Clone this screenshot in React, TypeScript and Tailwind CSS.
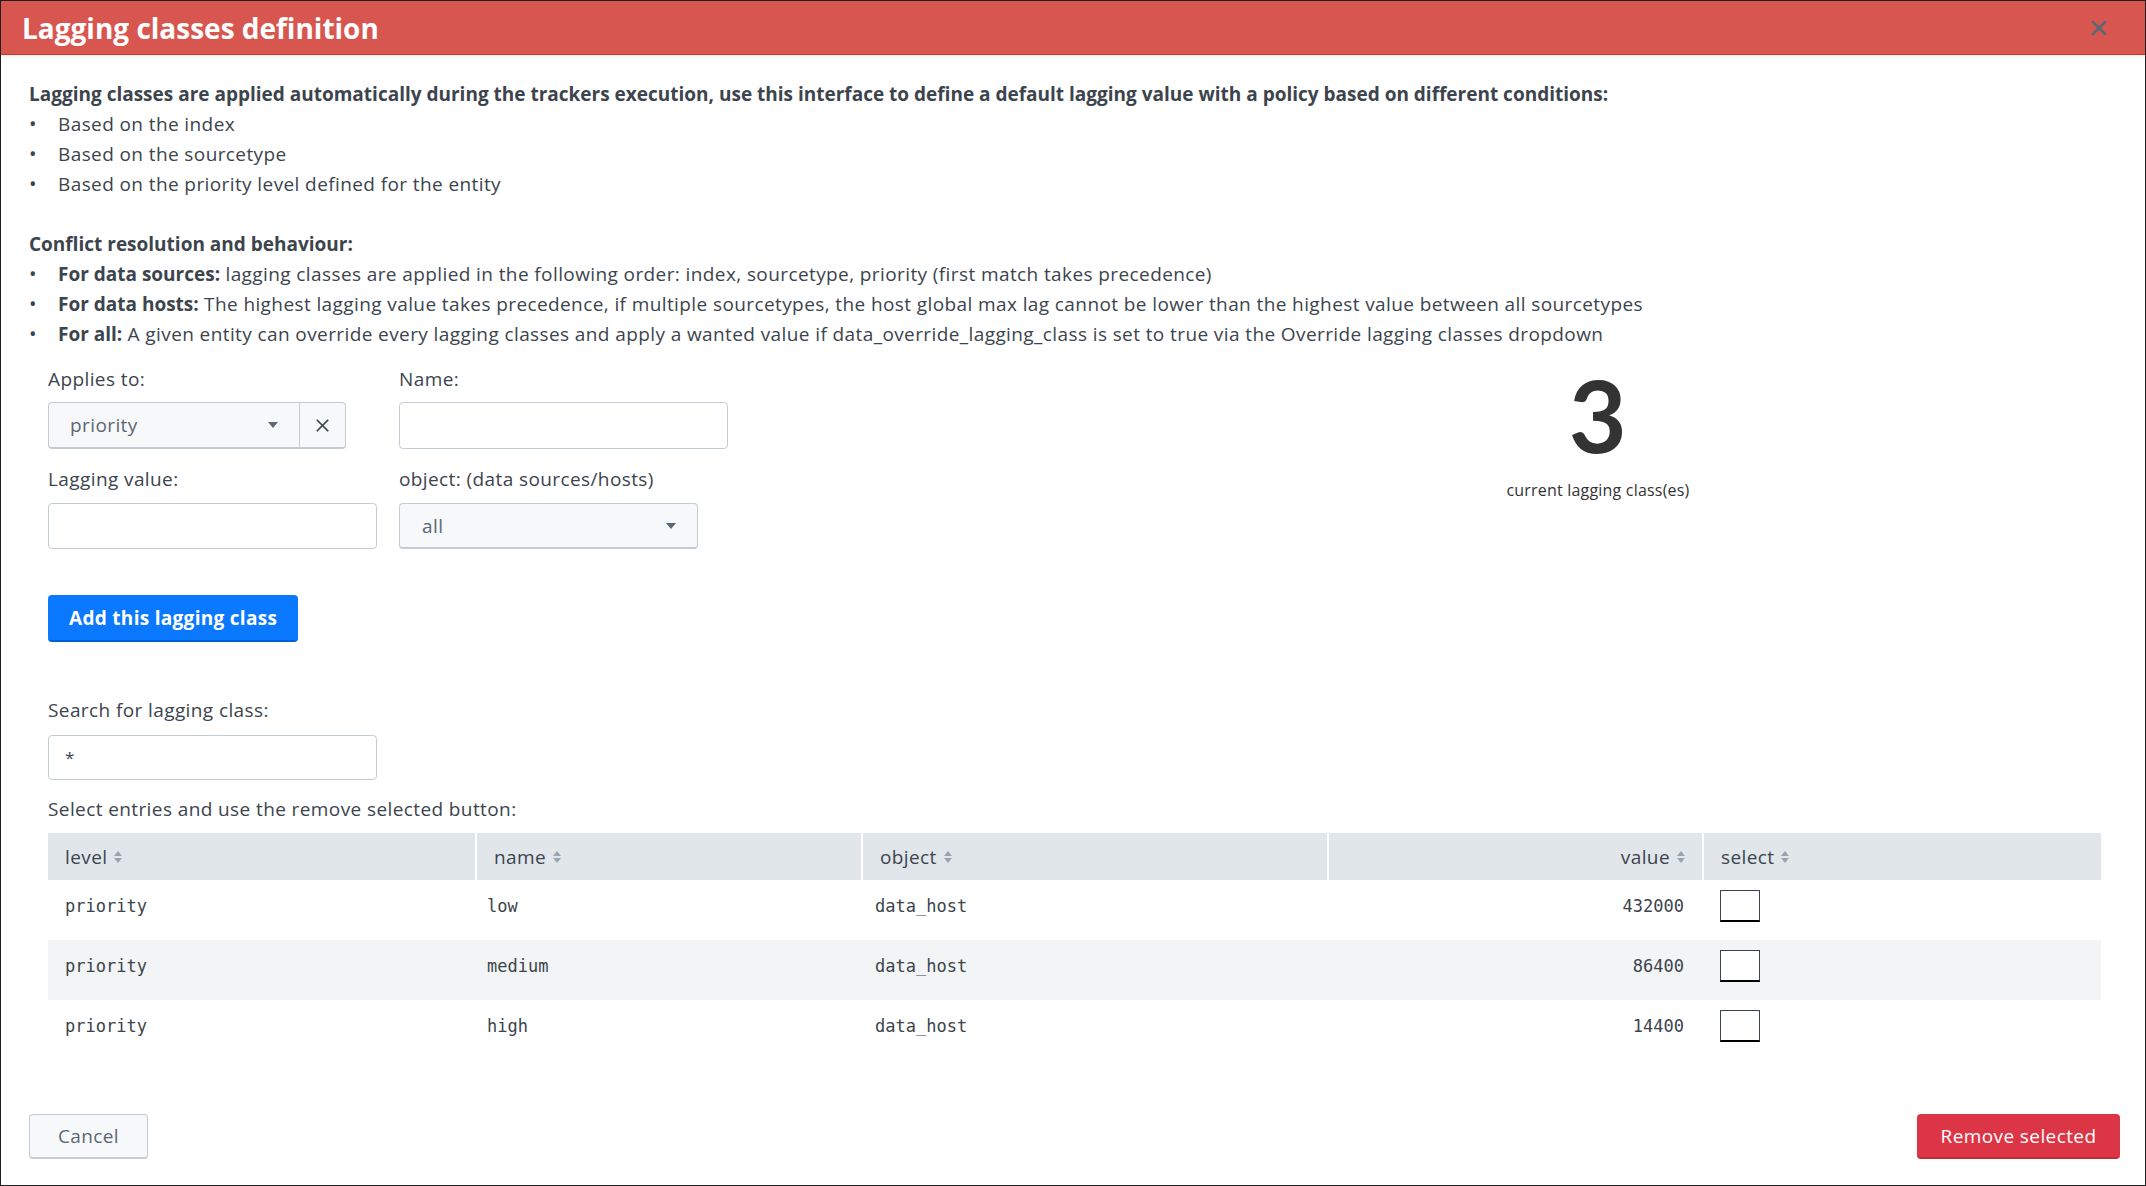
import type { ReactNode } from 'react';
import { X } from 'lucide-react';

const font = { fontFamily: '"Open Sans", Lato, sans-serif' };
const mono = { fontFamily: '"DejaVu Sans Mono", "Liberation Mono", monospace' };

function Caret() {
  return (
    <svg width="12" height="8" viewBox="0 0 12 8" className="shrink-0">
      <path d="M1 1h10L6 7z" fill="#5c6773" />
    </svg>
  );
}

function SortIcon() {
  return (
    <svg width="10" height="14" viewBox="0 0 10 14" className="ml-[6px] shrink-0">
      <path d="M1 6L5 1l4 5z" fill="#9aa4ae" />
      <path d="M1 8l4 5 4-5z" fill="#9aa4ae" />
    </svg>
  );
}

function Bullet({ children }: { children: ReactNode }) {
  return (
    <li className="flex">
      <span className="w-[29px] shrink-0 text-[20px] leading-[30px]">•</span>
      <span>{children}</span>
    </li>
  );
}

const rows = [
  { level: 'priority', name: 'low', object: 'data_host', value: '432000' },
  { level: 'priority', name: 'medium', object: 'data_host', value: '86400' },
  { level: 'priority', name: 'high', object: 'data_host', value: '14400' },
];

const cols = [
  { label: 'level', w: 'w-[427px]', right: false },
  { label: 'name', w: 'w-[386px]', right: false },
  { label: 'object', w: 'w-[466px]', right: false },
  { label: 'value', w: 'w-[375px]', right: true },
  { label: 'select', w: 'flex-1', right: false },
];

export default function App() {
  return (
    <div
      className="flex h-screen w-full flex-col overflow-hidden border border-[#1f1f1f] bg-white text-[19px] tracking-[0.4px] text-[#3c444d]"
      style={font}
    >
      {/* Header */}
      <div className="flex h-[54px] shrink-0 items-center justify-between border-b border-[#e0301e] bg-[#d85650] pl-[21px] pr-[34px] shadow-[0_2px_3px_rgba(0,0,0,0.06)]">
        <h1 className="text-[28px] font-bold leading-none tracking-[0px] text-white">Lagging classes definition</h1>
        <X className="h-[24px] w-[24px] text-[#5c6773]" strokeWidth={2.6} />
      </div>

      {/* Body */}
      <div className="flex flex-1 flex-col px-[28px] pt-[24px] leading-[30px]">
        <p className="font-bold tracking-[0px]">
          Lagging classes are applied automatically during the trackers execution, use this interface to define a default lagging value with a policy based on different conditions:
        </p>
        <ul>
          <Bullet>Based on the index</Bullet>
          <Bullet>Based on the sourcetype</Bullet>
          <Bullet>Based on the priority level defined for the entity</Bullet>
        </ul>
        <p className="mt-[30px] font-bold tracking-[0px]">Conflict resolution and behaviour:</p>
        <ul>
          <Bullet>
            <b className="tracking-[0px]">For data sources:</b> lagging classes are applied in the following order: index, sourcetype, priority (first match takes precedence)
          </Bullet>
          <Bullet>
            <b className="tracking-[0px]">For data hosts:</b> The highest lagging value takes precedence, if multiple sourcetypes, the host global max lag cannot be lower than the highest value between all sourcetypes
          </Bullet>
          <Bullet>
            <b className="tracking-[0px]">For all:</b> A given entity can override every lagging classes and apply a wanted value if data_override_lagging_class is set to true via the Override lagging classes dropdown
          </Bullet>
        </ul>

        {/* Form */}
        <div className="mt-[15px] flex pl-[19px]">
          <div className="grid grid-cols-[351px_330px] gap-y-[15px]">
            <div>
              <div>Applies to:</div>
              <div className="mt-[8px] flex h-[47px] w-[298px] rounded-[4px] border border-[#c3cbd4] border-b-2 bg-[#f7f8fa]">
                <div className="flex flex-1 items-center justify-between pl-[21px] pr-[20px] text-[#5c6773]">
                  <span>priority</span>
                  <Caret />
                </div>
                <div className="flex w-[46px] items-center justify-center border-l border-[#c3cbd4]">
                  <X className="h-[21px] w-[21px] text-[#3c444d]" strokeWidth={2} />
                </div>
              </div>
            </div>
            <div>
              <div>Name:</div>
              <div className="mt-[8px] h-[47px] w-[329px] rounded-[4px] border border-[#c3cbd4] bg-white" />
            </div>
            <div>
              <div>Lagging value:</div>
              <div className="mt-[9px] h-[46px] w-[329px] rounded-[4px] border border-[#c3cbd4] bg-white" />
            </div>
            <div>
              <div>object: (data sources/hosts)</div>
              <div className="mt-[9px] flex h-[46px] w-[299px] items-center justify-between rounded-[4px] border border-[#c3cbd4] border-b-2 bg-[#f7f8fa] pl-[22px] pr-[20px] text-[#5c6773]">
                <span>all</span>
                <Caret />
              </div>
            </div>
          </div>
          <div className="ml-[719px] flex w-[300px] flex-col items-center">
            <div className="text-[100px] font-bold leading-[100px] text-[#333]" style={{ fontFamily: 'Lato, sans-serif' }}>
              3
            </div>
            <div className="mt-[14px] text-[16px] leading-[24px] tracking-[0.2px] text-[#333]">current lagging class(es)</div>
          </div>
        </div>

        <div className="pl-[19px]">
          <button className="mt-[46px] h-[47px] rounded-[4px] border-b-2 border-[#0060d9] bg-[#0a78ff] px-[21px] font-bold tracking-[0.3px] text-white">
            Add this lagging class
          </button>

          <div className="mt-[53px]">Search for lagging class:</div>
          <div className="mt-[10px] flex h-[45px] w-[329px] items-center rounded-[4px] border border-[#c3cbd4] bg-white pl-[16px] text-[17px] text-[#3c444d]">
            *
          </div>

          <div className="mt-[14px]">Select entries and use the remove selected button:</div>

          {/* Table */}
          <div className="mt-[9px] mr-[16px]">
            <div className="flex h-[47px] bg-[#e1e6eb]">
              {cols.map((c, i) => (
                <div
                  key={c.label}
                  className={`${c.w} flex items-center ${i > 0 ? 'border-l-2 border-white' : ''} ${c.right ? 'justify-end pr-[16px]' : 'pl-[17px]'}`}
                >
                  <span>{c.label}</span>
                  <SortIcon />
                </div>
              ))}
            </div>
            {rows.map((r, idx) => (
              <div
                key={r.name}
                className={`flex h-[60px] items-center pb-[8px] text-[17px] tracking-[0px] ${idx === 1 ? 'bg-[#f2f4f5]' : 'bg-white'}`}
                style={mono}
              >
                <div className="w-[427px] pl-[17px]">{r.level}</div>
                <div className="w-[386px] pl-[12px]">{r.name}</div>
                <div className="w-[466px] pl-[14px]">{r.object}</div>
                <div className="w-[375px] pr-[18px] text-right">{r.value}</div>
                <div className="flex-1 pl-[18px]">
                  <div className="h-[32px] w-[40px] border border-[#3c444d] border-b-2 border-b-black bg-white" />
                </div>
              </div>
            ))}
          </div>
        </div>

        {/* Footer */}
        <div className="mt-auto mb-[26px] flex items-center justify-between">
          <button className="h-[45px] w-[119px] rounded-[4px] border border-[#c3cbd4] border-b-2 bg-[#f7f8fa] text-[#5c6773]">
            Cancel
          </button>
          <button className="-mr-[3px] h-[45px] w-[203px] rounded-[4px] border-b-2 border-[#c32a3a] bg-[#dc3545] text-white">
            Remove selected
          </button>
        </div>
      </div>
    </div>
  );
}
